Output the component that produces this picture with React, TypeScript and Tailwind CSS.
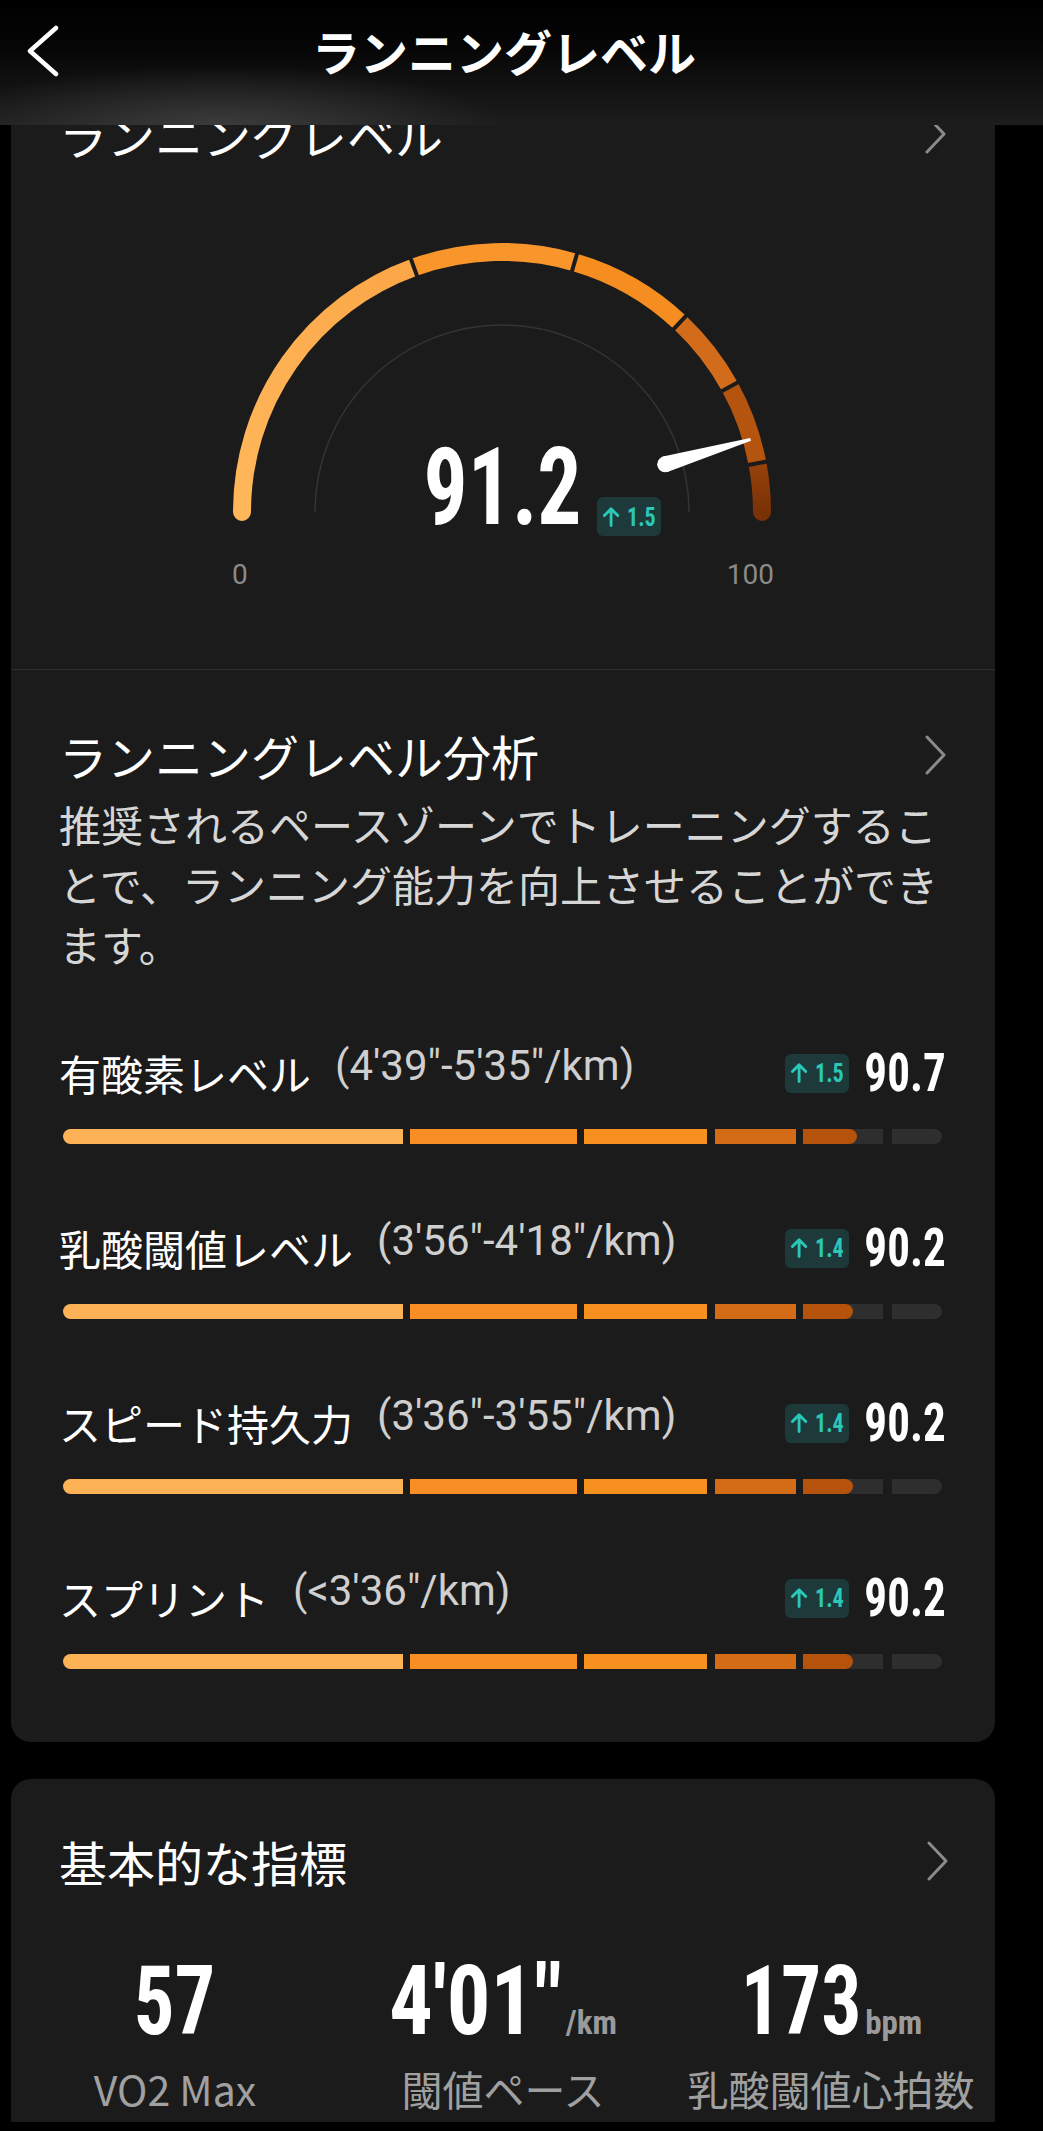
import React from "react";

const NUM = "font-['Roboto_Condensed','DejaVu_Sans_Condensed','Liberation_Sans_Narrow',Roboto,sans-serif] font-stretch-condensed font-bold";

function polar(cx: number, cy: number, r: number, deg: number) {
  const a = (deg * Math.PI) / 180;
  return [cx + r * Math.cos(a), cy - r * Math.sin(a)];
}
function pctToDeg(p: number) {
  return 180 - 1.8 * p;
}
function arcPath(cx: number, cy: number, r: number, p1: number, p2: number) {
  const a1 = pctToDeg(p1);
  const a2 = pctToDeg(p2);
  const [x1, y1] = polar(cx, cy, r, a1);
  const [x2, y2] = polar(cx, cy, r, a2);
  const large = a1 - a2 > 180 ? 1 : 0;
  return `M ${x1} ${y1} A ${r} ${r} 0 ${large} 1 ${x2} ${y2}`;
}

function Chevron() {
  return (
    <svg width="26" height="40" viewBox="0 0 26 40">
      <polyline points="5,2 22,20 5,38" fill="none" stroke="#8a8a8a" strokeWidth="3" strokeLinecap="round" strokeLinejoin="round" />
    </svg>
  );
}

function Badge({ v }: { v: string }) {
  return (
    <div className="flex h-[39px] w-[64px] items-center rounded-[6px] bg-[#1d3939] pl-[5px]">
      <svg width="19" height="22" viewBox="0 0 19 22">
        <path d="M9.5 20 V2.5 M2.5 9.5 L9.5 2.5 L16.5 9.5" fill="none" stroke="#2bc8b8" strokeWidth="3" strokeLinecap="round" strokeLinejoin="round" />
      </svg>
      <span className={`${NUM} ml-[7px] inline-block origin-left scale-x-[0.85] text-[26px] leading-none text-[#2bc8b8]`}>{v}</span>
    </div>
  );
}

function Bar({ value }: { value: number }) {
  const fill = Math.max(0, Math.min(80, ((value - 84) / 10) * 80));
  return (
    <div className="ml-[4px] flex h-[15px]">
      <div className="w-[340px] rounded-l-full bg-[#fdb256]" />
      <div className="ml-[7px] w-[167px] bg-[#f98f24]" />
      <div className="ml-[7px] w-[123px] bg-[#f7901e]" />
      <div className="ml-[8px] w-[81px] bg-[#d46b17]" />
      <div className="ml-[7px] w-[80px] bg-[#2e2e2e]">
        <div className="h-full rounded-r-full bg-[#b5520c]" style={{ width: `${fill}px` }} />
      </div>
      <div className="ml-[9px] w-[50px] rounded-r-full bg-[#2e2e2e]" />
    </div>
  );
}

const rows = [
  { label: "有酸素レベル", range: "(4'39\"-5'35\"/km)", delta: "1.5", value: "90.7", v: 90.7 },
  { label: "乳酸閾値レベル", range: "(3'56\"-4'18\"/km)", delta: "1.4", value: "90.2", v: 90.2 },
  { label: "スピード持久力", range: "(3'36\"-3'55\"/km)", delta: "1.4", value: "90.2", v: 90.2 },
  { label: "スプリント", range: "(<3'36\"/km)", delta: "1.4", value: "90.2", v: 90.2 },
];

function Gauge() {
  const cx = 491;
  const cy = 350;
  const r = 260;
  const segs = [
    { a: 0, b: 39, c: "#fcad50" },
    { a: 39, b: 59, c: "#f9962b" },
    { a: 59, b: 74, c: "#f68d20" },
    { a: 74, b: 84, c: "#d36c1a" },
    { a: 84, b: 94, c: "#b4540f" },
    { a: 94, b: 100, c: "#843707" },
  ];
  const seps = [39, 59, 74, 84, 94];
  const needleDeg = 16.3;
  const [bx, by] = polar(cx, cy, 170, needleDeg);
  const [tx, ty] = polar(cx, cy, 259, needleDeg);
  const rad = (needleDeg * Math.PI) / 180;
  const nx = Math.sin(rad);
  const ny = Math.cos(rad);
  const needle = `M ${bx - 8 * nx} ${by - 8 * ny} L ${tx - 1.4 * nx} ${ty - 1.4 * ny} L ${tx + 1.4 * nx} ${ty + 1.4 * ny} L ${bx + 8 * nx} ${by + 8 * ny} Z`;
  return (
    <svg width="984" height="508" viewBox="0 0 984 508" className="absolute inset-0">
      <defs>
        <linearGradient id="g1" x1="0" y1="1" x2="1" y2="0">
          <stop offset="0" stopColor="#ffb75a" />
          <stop offset="1" stopColor="#fba647" />
        </linearGradient>
        <linearGradient id="g6" x1="0" y1="0" x2="0" y2="1">
          <stop offset="0" stopColor="#974209" />
          <stop offset="1" stopColor="#7a3106" />
        </linearGradient>
      </defs>
      <path d={arcPath(cx, cy, 187, 0, 100)} fill="none" stroke="#343434" strokeWidth="1.5" />
      <path d={arcPath(cx, cy, r, 0, 39)} fill="none" stroke="url(#g1)" strokeWidth="18" strokeLinecap="round" />
      <path d={arcPath(cx, cy, r, 94, 100)} fill="none" stroke="url(#g6)" strokeWidth="18" strokeLinecap="round" />
      {segs.slice(1, 5).map((s) => (
        <path key={s.a} d={arcPath(cx, cy, r, s.a, s.b)} fill="none" stroke={s.c} strokeWidth="18" />
      ))}
      {seps.map((p) => {
        const d = pctToDeg(p);
        const [x1, y1] = polar(cx, cy, r - 12, d);
        const [x2, y2] = polar(cx, cy, r + 12, d);
        return <line key={p} x1={x1} y1={y1} x2={x2} y2={y2} stroke="#1b1b1b" strokeWidth="4" />;
      })}
      <path d={needle} fill="#ffffff" />
      <circle cx={bx} cy={by} r="8" fill="#ffffff" />
    </svg>
  );
}

export default function App() {
  return (
    <div className="relative h-[2131px] w-[1043px] overflow-hidden bg-black font-['Noto_Sans_CJK_JP','Noto_Sans',sans-serif]">
      {/* Header overlay */}
      <div className="absolute left-0 right-0 top-0 z-10 flex h-[125px] items-start bg-[radial-gradient(ellipse_280px_60px_at_220px_125px,rgba(85,85,85,0.55),rgba(85,85,85,0)),linear-gradient(to_bottom,#000000_0%,#050505_35%,#1d1d1d_100%)]">
        <svg width="40" height="52" viewBox="0 0 40 52" className="absolute left-[22px] top-[25px]">
          <polyline points="34,3 8,26 34,49" fill="none" stroke="#ffffff" strokeWidth="4.5" strokeLinecap="round" strokeLinejoin="round" />
        </svg>
        <div className="mt-[22px] w-full pr-[35px] text-center text-[48px] font-bold leading-[56px] text-white">ランニングレベル</div>
      </div>

      <div className="pl-[11px] pr-[48px] pt-[46px]">
        {/* Card 1 */}
        <div className="rounded-[20px] bg-[#1b1b1b] pt-[60px]">
          <div className="flex h-[56px] items-center justify-between pl-[48px] pr-[47px]">
            <span className="text-[48px] leading-[56px] text-white">ランニングレベル</span>
            <Chevron />
          </div>
          <div className="relative h-[508px] border-b border-[#2e2e2e]">
            <Gauge />
            <span className="absolute left-[221px] top-[399px] font-['Roboto',sans-serif] text-[28px] leading-none text-[#8a8a8a]">0</span>
            <span className="absolute right-[221px] top-[399px] font-['Roboto',sans-serif] text-[28px] leading-none text-[#8a8a8a]">100</span>
            <div className="absolute left-0 right-0 top-[271px] flex justify-center">
              <div className="relative">
                <span className={`${NUM} block origin-center scale-x-[0.81] text-[108px] leading-none text-white`}>91.2</span>
                <div className="absolute left-full top-[64px] -ml-[4px]">
                  <Badge v="1.5" />
                </div>
              </div>
            </div>
          </div>
          <div className="pb-[73px] pl-[48px] pr-[49px] pt-[57px]">
            <div className="-mr-[2px] flex h-[56px] items-center justify-between">
              <span className="text-[48px] leading-[56px] text-white">ランニングレベル分析</span>
              <Chevron />
            </div>
            <p className="mt-[11px] text-[42px] leading-[60px] text-[#d6d6d6]">
              推奨されるペースゾーンでトレーニングすることで、ランニング能力を向上させることができます。
            </p>
            {rows.map((r, i) => (
              <div key={r.label} className={i === 0 ? "mt-[71px]" : "mt-[76px]"}>
                <div className="flex h-[56px] items-center justify-between">
                  <div className="flex items-center">
                    <span className="text-[42px] leading-[56px] text-white">{r.label}</span>
                    <span className="mb-[14px] ml-[24px] font-['Roboto',sans-serif] text-[42px] leading-[48px] text-[#cfcfcf]">{r.range}</span>
                  </div>
                  <div className="flex items-center">
                    <Badge v={r.delta} />
                    <span className={`${NUM} ml-[1px] inline-block origin-right scale-x-[0.85] text-[53px] leading-none text-white`}>{r.value}</span>
                  </div>
                </div>
                <div className="mt-[28px]">
                  <Bar value={r.v} />
                </div>
              </div>
            ))}
          </div>
        </div>

        {/* Card 2 */}
        <div className="mt-[37px] h-[343px] rounded-t-[20px] bg-[#1b1b1b] pt-[54px]">
          <div className="flex h-[56px] items-center justify-between pl-[48px] pr-[45px]">
            <span className="text-[48px] leading-[56px] text-white">基本的な指標</span>
            <Chevron />
          </div>
          <div className="mt-[64px] grid grid-cols-3">
            <div className="flex flex-col items-center">
              <div className="flex items-baseline">
                <span className={`${NUM} inline-block origin-center scale-x-[0.84] text-[96px] leading-none text-white`}>57</span>
              </div>
              <span className="mt-[14px] text-[41px] leading-[50px] text-[#a0a0a0]">VO2 Max</span>
            </div>
            <div className="flex flex-col items-center">
              <div className="flex items-baseline">
                <span className={`${NUM} -ml-[19px] inline-block origin-right scale-x-[0.9] text-[96px] leading-none text-white`}>4'01"</span>
                <span className={`${NUM} ml-[4px] text-[33px] leading-none text-[#9a9a9a]`}>/km</span>
              </div>
              <span className="mt-[14px] text-[41px] leading-[50px] text-[#a0a0a0]">閾値ペース</span>
            </div>
            <div className="flex flex-col items-center">
              <div className="flex items-baseline">
                <span className={`${NUM} -ml-[24px] inline-block origin-right scale-x-[0.83] text-[96px] leading-none text-white`}>173</span>
                <span className={`${NUM} ml-[4px] text-[33px] leading-none text-[#9a9a9a]`}>bpm</span>
              </div>
              <span className="mt-[14px] text-[41px] leading-[50px] text-[#a0a0a0]">乳酸閾値心拍数</span>
            </div>
          </div>
        </div>
      </div>
    </div>
  );
}
